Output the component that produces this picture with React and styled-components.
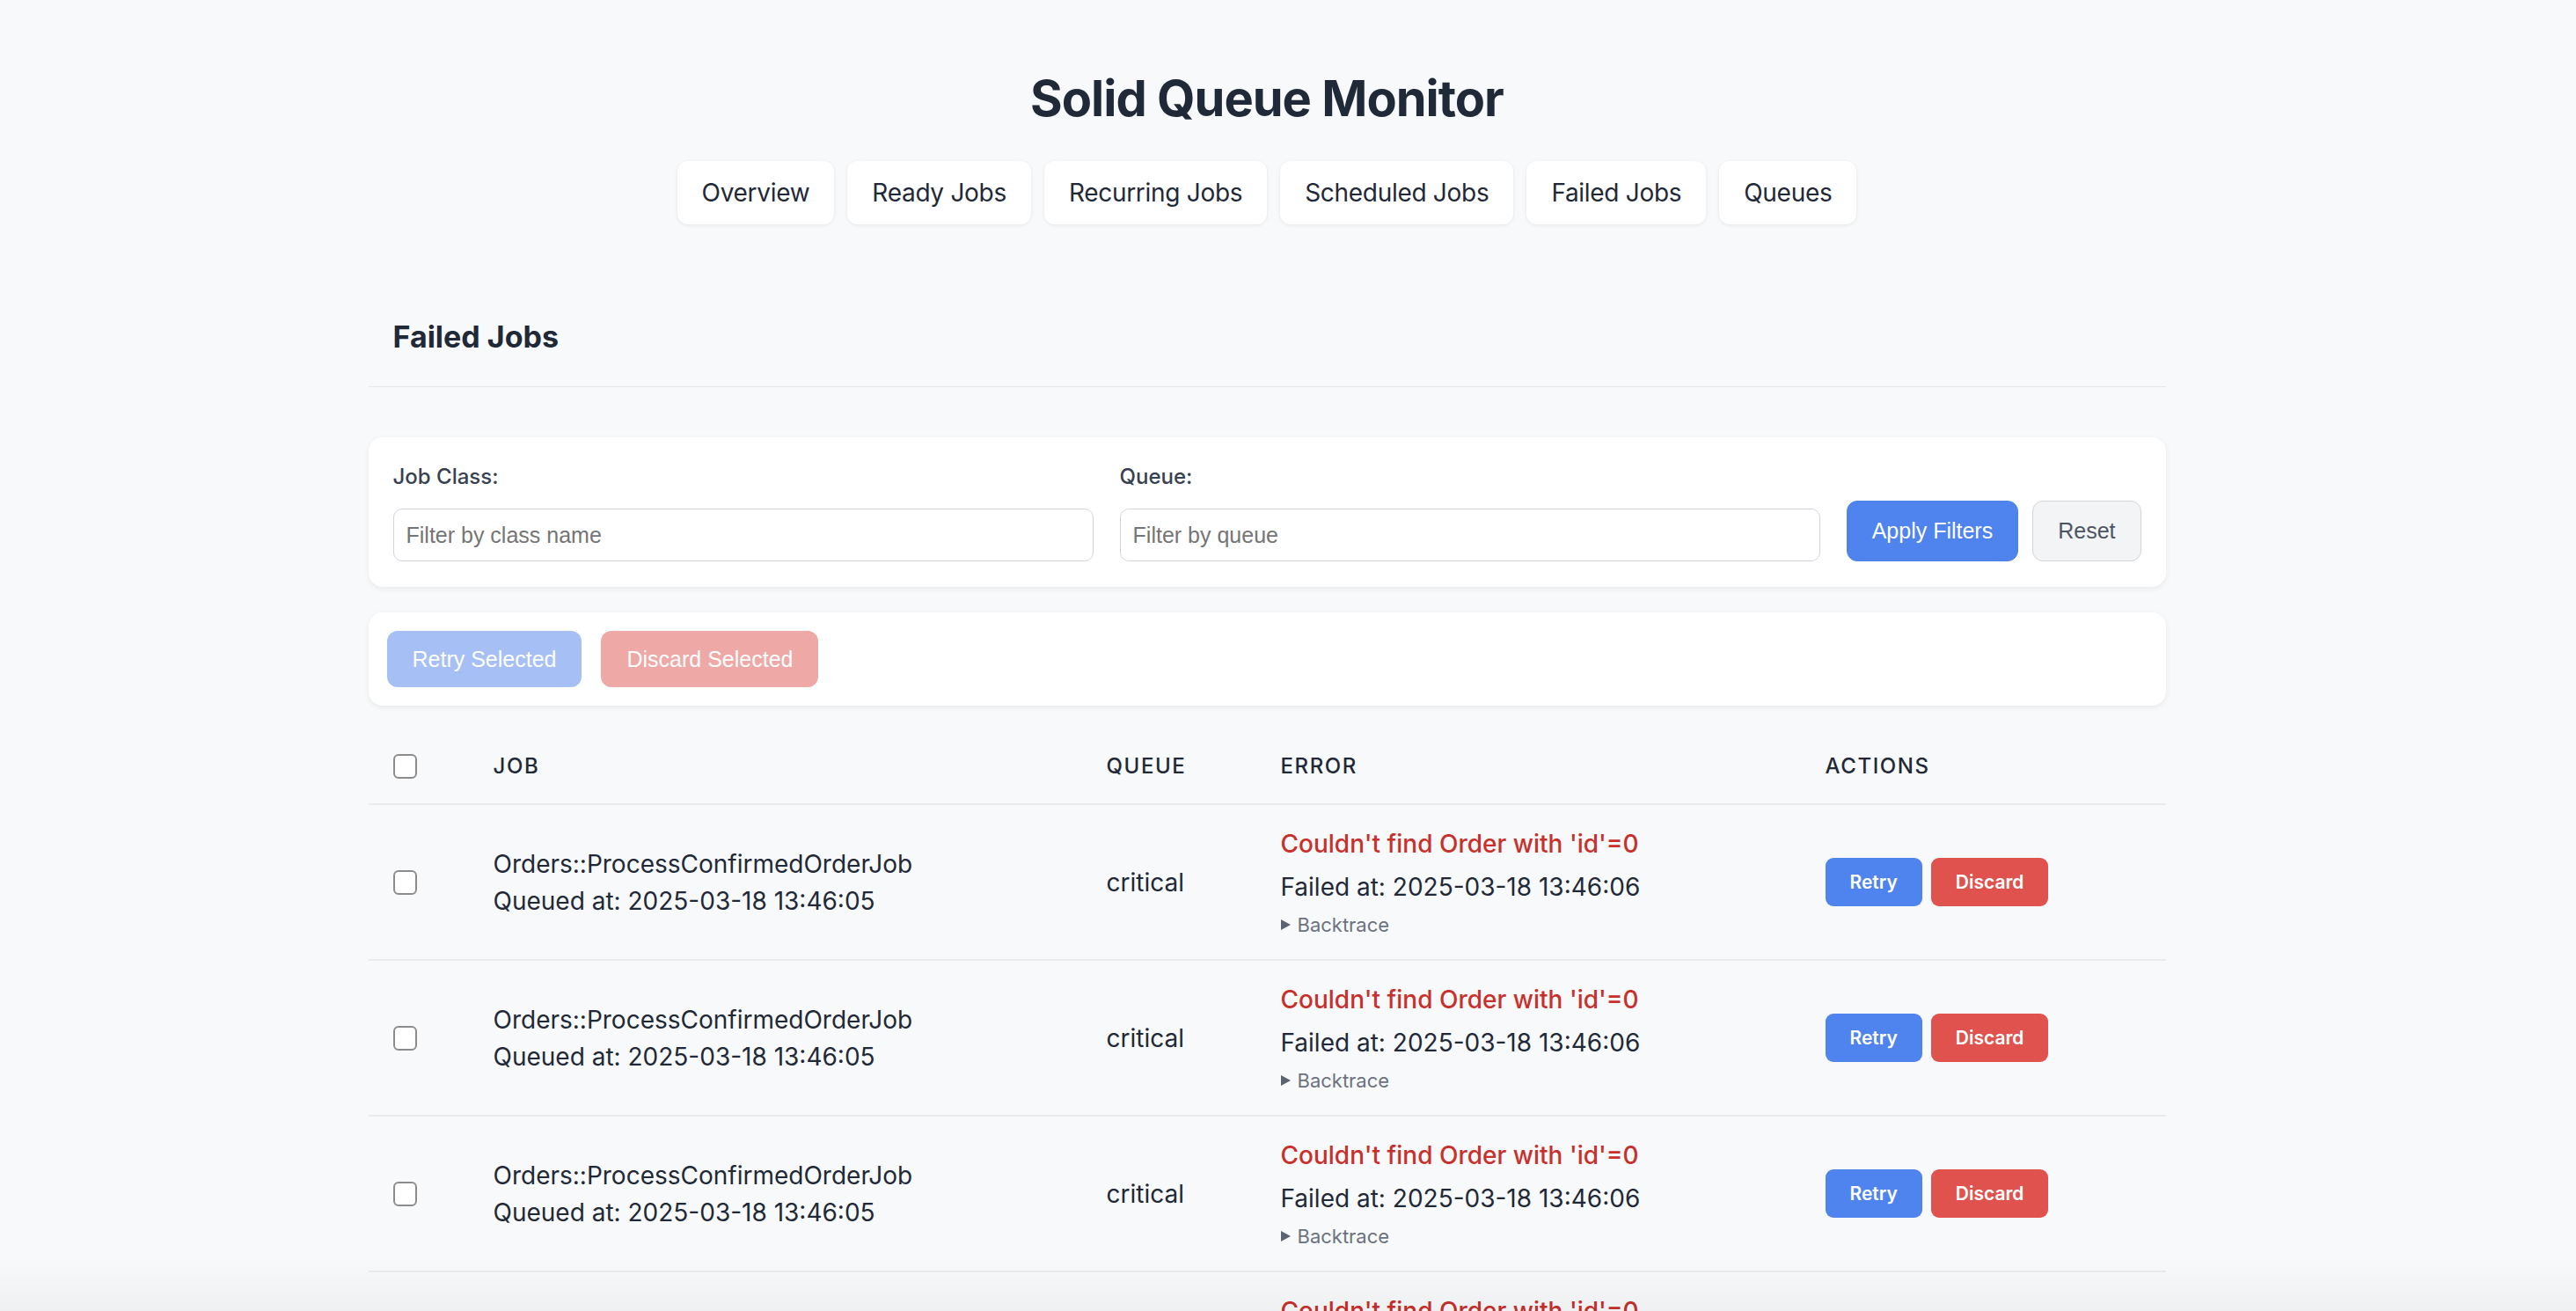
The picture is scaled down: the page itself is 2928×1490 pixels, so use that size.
import React from 'react';
import styled, { createGlobalStyle } from 'styled-components';

const GlobalStyle = createGlobalStyle`
    html, body {
        margin: 0;
        padding: 0;
        background: #f8f9fa;
    }
    body {
        font-family: Inter, "Noto Sans", sans-serif;
        color: #1f2937;
    }
    * {
        box-sizing: border-box;
    }
`

const navItems = ["Overview", "Ready Jobs", "Recurring Jobs", "Scheduled Jobs", "Failed Jobs", "Queues"];

const jobs = [1, 2, 3, 4].map((n) => ({
    id: n,
    className: "Orders::ProcessConfirmedOrderJob",
    queuedAt: "2025-03-18 13:46:05",
    queue: "critical",
    error: "Couldn't find Order with 'id'=0",
    failedAt: "2025-03-18 13:46:06",
}));

function App() {
  return (
    <Page>
      <GlobalStyle />
      <Header>
          <Title>Solid Queue Monitor</Title>
          <Nav>
              {navItems.map((item) => (
                  <NavLink key={item} href="#">{item}</NavLink>
              ))}
          </Nav>
      </Header>

      <Main>
          <SectionHeader>
              <h2>Failed Jobs</h2>
          </SectionHeader>

          <FilterCard>
              <Field>
                  <Label>Job Class:</Label>
                  <Input placeholder="Filter by class name" />
              </Field>
              <Field>
                  <Label>Queue:</Label>
                  <Input placeholder="Filter by queue" />
              </Field>
              <FilterButtons>
                  <FormButton primary>Apply Filters</FormButton>
                  <FormButton>Reset</FormButton>
              </FilterButtons>
          </FilterCard>

          <BulkCard>
              <BulkButton tone="blue" disabled>Retry Selected</BulkButton>
              <BulkButton tone="red" disabled>Discard Selected</BulkButton>
          </BulkCard>

          <Table>
              <colgroup>
                  <col style={{ width: 114 }} />
                  <col style={{ width: 697 }} />
                  <col style={{ width: 198 }} />
                  <col style={{ width: 619 }} />
                  <col />
              </colgroup>
              <thead>
                  <tr>
                      <Th><Checkbox type="checkbox" /></Th>
                      <Th>Job</Th>
                      <Th>Queue</Th>
                      <Th>Error</Th>
                      <Th>Actions</Th>
                  </tr>
              </thead>
              <tbody>
                  {jobs.map((job) => (
                      <tr key={job.id}>
                          <Td><Checkbox type="checkbox" /></Td>
                          <Td>
                              <JobName>{job.className}</JobName>
                              <JobMeta>Queued at: {job.queuedAt}</JobMeta>
                          </Td>
                          <Td>{job.queue}</Td>
                          <Td>
                              <ErrorMessage>{job.error}</ErrorMessage>
                              <FailedAt>Failed at: {job.failedAt}</FailedAt>
                              <Backtrace>
                                  <summary>Backtrace</summary>
                              </Backtrace>
                          </Td>
                          <Td>
                              <Actions>
                                  <ActionButton tone="blue">Retry</ActionButton>
                                  <ActionButton tone="red">Discard</ActionButton>
                              </Actions>
                          </Td>
                      </tr>
                  ))}
              </tbody>
          </Table>
      </Main>
      <BottomFade />
    </Page>
  );
}

export default App;


const Page = styled.div`
    /* the original had a scrollbar gutter on the right */
    padding-right: 48px;
    min-height: 100vh;
`

const Header = styled.header`
    display: flex;
    flex-direction: column;
    align-items: center;
    padding-top: 78px;
`

const Title = styled.h1`
    margin: 0;
    font-size: 56px;
    line-height: 68px;
    font-weight: 700;
    letter-spacing: -1px;
    color: #1f2937;
`

const Nav = styled.nav`
    display: flex;
    gap: 15px;
    margin-top: 37px;
`

const NavLink = styled.a`
    display: block;
    height: 72px;
    padding: 0 28px;
    line-height: 72px;
    font-size: 28px;
    letter-spacing: -0.3px;
    color: #1f2937;
    text-decoration: none;
    background: #fff;
    border-radius: 12px;
    box-shadow: 0 1px 4px rgba(0, 0, 0, 0.08);
`

const Main = styled.main`
    width: 2043px;
    margin: 0 auto;
    padding-top: 79px;
`

const SectionHeader = styled.div`
    padding: 28px 28px 36px;
    border-bottom: 1px solid #e5e7eb;

    h2 {
        margin: 0;
        font-size: 34px;
        line-height: 41px;
        font-weight: 700;
        color: #1f2937;
    }
`

const Card = styled.div`
    background: #fff;
    border-radius: 16px;
    box-shadow: 0 2px 6px rgba(0, 0, 0, 0.07);
`

const FilterCard = styled(Card)`
    display: flex;
    align-items: flex-end;
    gap: 30px;
    margin-top: 57px;
    padding: 30px 28px 29px;
`

const Field = styled.div`
    flex: 1;
    display: flex;
    flex-direction: column;
`

const Label = styled.label`
    display: block;
    margin-bottom: 21px;
    font-size: 24px;
    line-height: 30px;
    font-weight: 500;
    color: #374151;
`

const Input = styled.input`
    height: 60px;
    padding: 0 14px;
    border: 1px solid #d1d5db;
    border-radius: 10px;
    font-family: "Liberation Sans", Arial, sans-serif;
    font-size: 25px;
    color: #1f2937;
    background: #fff;
    outline: none;

    &::placeholder {
        color: #757575;
    }
`

const FilterButtons = styled.div`
    display: flex;
    gap: 16px;
`

const FormButton = styled.button`
    height: 69px;
    padding: 0 28px;
    border-radius: 12px;
    font-family: "Liberation Sans", Arial, sans-serif;
    font-size: 25px;
    border: 1px solid ${(p) => (p.primary ? "#4f83ee" : "#d1d5db")};
    background: ${(p) => (p.primary ? "#4f83ee" : "#f3f4f6")};
    color: ${(p) => (p.primary ? "#fff" : "#4b5563")};
`

const BulkCard = styled(Card)`
    display: flex;
    gap: 22px;
    margin-top: 29px;
    padding: 21px;
`

const BulkButton = styled.button`
    height: 64px;
    padding: 0 29px;
    border: none;
    border-radius: 12px;
    font-family: "Liberation Sans", Arial, sans-serif;
    font-size: 25px;
    color: #fff;
    background: ${(p) => (p.tone === "red" ? "#eea8a6" : "#a6bff5")};
`

const Table = styled.table`
    width: 100%;
    margin-top: 26px;
    border-collapse: collapse;
    table-layout: fixed;
`

const Th = styled.th`
    padding: 28px;
    text-align: left;
    font-size: 24px;
    line-height: 29px;
    font-weight: 500;
    letter-spacing: 1.6px;
    text-transform: uppercase;
    color: #1f2937;
    border-bottom: 2px solid #e9ebee;
    vertical-align: middle;
`

const Td = styled.td`
    padding: 27px 28px;
    font-size: 28px;
    line-height: 42px;
    color: #1f2937;
    border-bottom: 2px solid #e9ebee;
    vertical-align: middle;
`

const Checkbox = styled.input`
    appearance: none;
    display: block;
    width: 27px;
    height: 28px;
    margin: 0;
    border: 2px solid #8c8c8c;
    border-radius: 6px;
    background: #fff;
`

const JobName = styled.div``

const JobMeta = styled.div``

const ErrorMessage = styled.div`
    font-weight: 500;
    line-height: 34px;
    color: #c8302c;
`

const FailedAt = styled.div`
    margin-top: 15px;
    line-height: 34px;
`

const Backtrace = styled.details`
    margin-top: 14px;

    summary {
        display: flex;
        align-items: center;
        gap: 8px;
        list-style: none;
        font-size: 22px;
        line-height: 24px;
        color: #6b7280;
    }

    summary::-webkit-details-marker {
        display: none;
    }

    summary::before {
        content: "";
        width: 0;
        height: 0;
        border-left: 11px solid #5b6270;
        border-top: 6.5px solid transparent;
        border-bottom: 6.5px solid transparent;
    }
`

const Actions = styled.div`
    display: flex;
    gap: 10px;
`

const ActionButton = styled.button`
    height: 55px;
    padding: 0 28px;
    border: none;
    border-radius: 9px;
    font-family: Inter, sans-serif;
    font-size: 21px;
    font-weight: 600;
    color: #fff;
    background: ${(p) => (p.tone === "red" ? "#df524d" : "#4f83ee")};
`

const BottomFade = styled.div`
    position: fixed;
    left: 0;
    right: 0;
    bottom: 0;
    height: 60px;
    pointer-events: none;
    background: linear-gradient(rgba(0, 0, 0, 0), rgba(0, 0, 0, 0.035));
`
